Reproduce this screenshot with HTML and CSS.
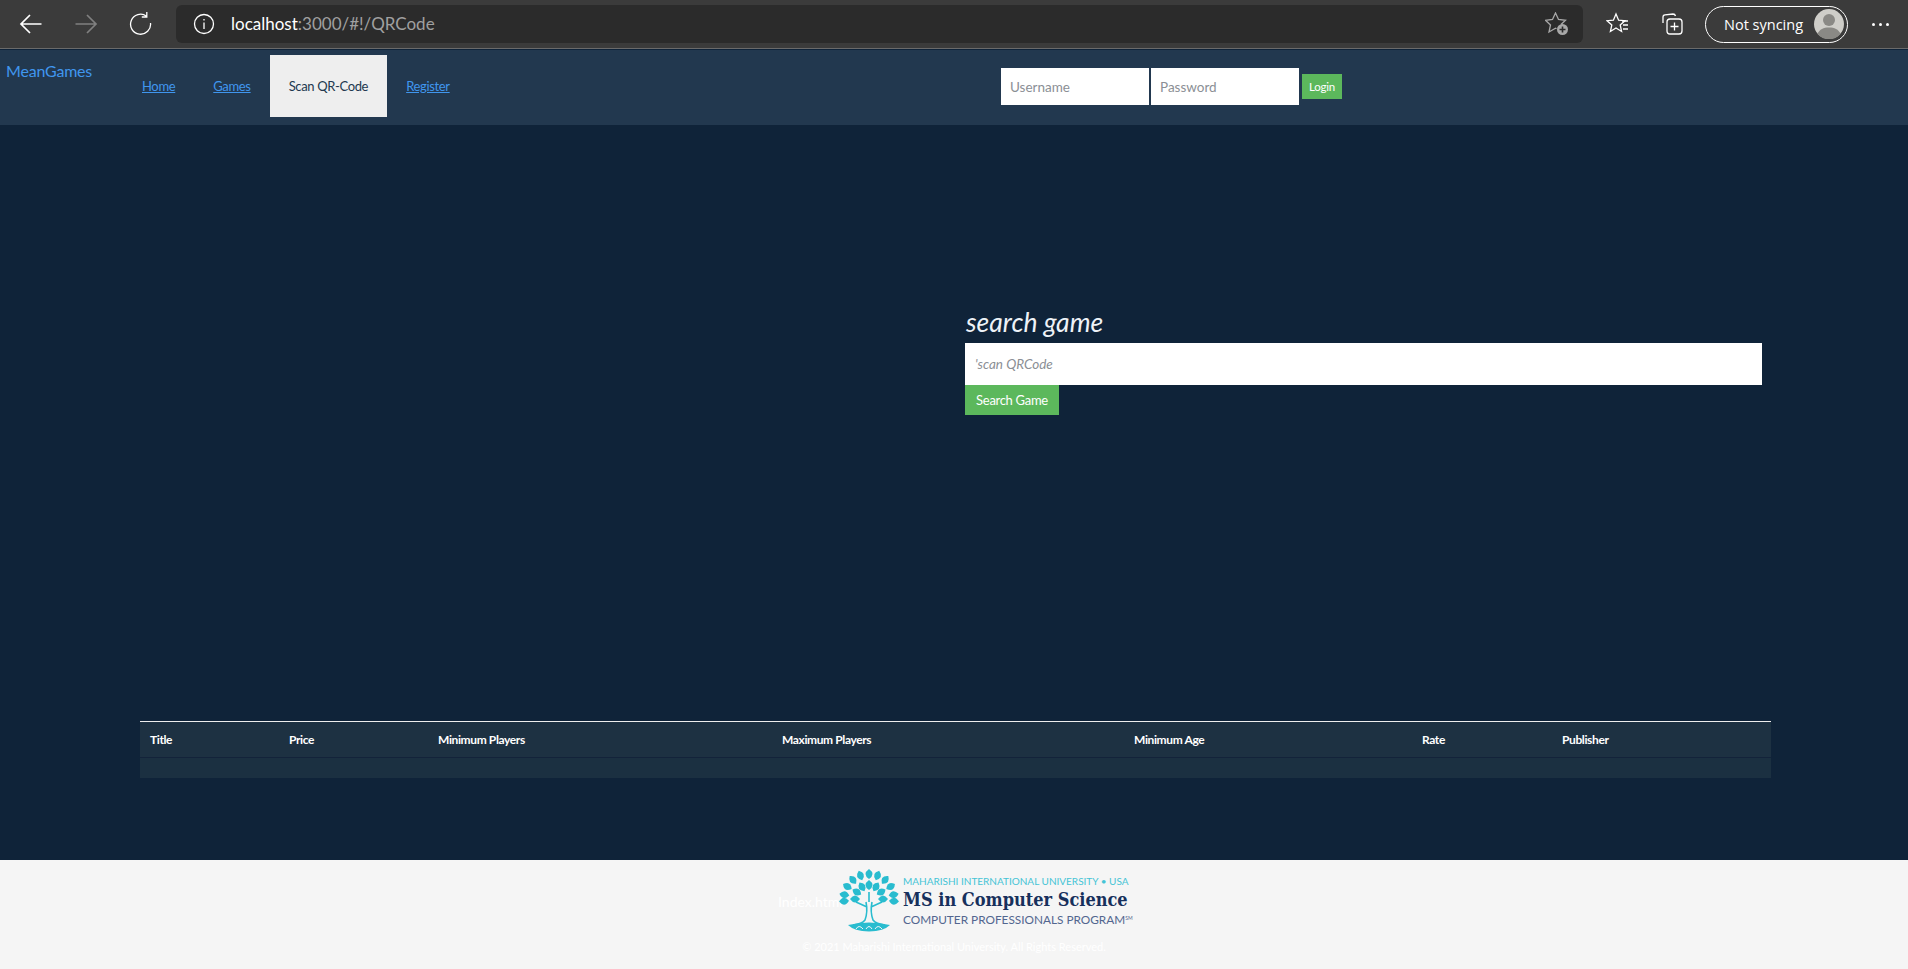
FILE: index.html
```html
<!DOCTYPE html>
<html lang="en">
<head>
  <meta charset="UTF-8" />
  <title>MeanGames</title>
  <link rel="stylesheet" href="styles.css">
</head>
<body>

  <!-- browser toolbar -->
  <div class="toolbar">
    <div class="tool-btn">
      <svg width="24" height="24" viewBox="0 0 24 24" class="ico"><path d="M22.5 12H2M11 3l-9 9 9 9"/></svg>
    </div>
    <div class="tool-btn dim">
      <svg width="24" height="24" viewBox="0 0 24 24" class="ico"><path d="M1.5 12H22M13 3l9 9-9 9"/></svg>
    </div>
    <div class="tool-btn">
      <svg width="24" height="24" viewBox="0 0 24 24" class="ico thin"><path d="M17.5 4.2A10 10 0 1 0 21.5 11M17.8 0v5h-5"/></svg>
    </div>
    <div class="address">
      <svg width="22" height="22" viewBox="0 0 22 22" class="ico thin"><circle cx="11" cy="11" r="9.5"/><path d="M11 9.5V16M11 6v1.6"/></svg>
      <span class="url"><span class="host">localhost</span>:3000/#!/QRCode</span>
      <svg class="ico thin star-add" width="24" height="24" viewBox="0 0 24 24"><path d="M11.5 16.8L10.5 16.2 4 20 5.5 13 .5 8.3 7.5 7.5 10.5 1 13.5 7.5 20.5 8.3 16 12.5"/><circle cx="17.5" cy="17.5" r="5.5" class="fill-grey"/><path d="M17.5 14.5v6M14.5 17.5h6" class="dark"/></svg>
    </div>
    <svg class="ico thin fav" width="24" height="24" viewBox="0 0 24 24"><path d="M10 2l2.6 6.2 6.4.5-4.800 4.300 1.400 6.500L10 16l-5.600 3.500L5.800 13 1 8.700l6.400-.5z"/><path d="M16 9h6M17 13h5M17 17h5"/></svg>
    <svg class="ico thin coll" width="24" height="24" viewBox="0 0 24 24"><path d="M3 11V5q0-2 2-2.200L13 2q2 0 2.500 2"/><rect x="7" y="7" width="15" height="15" rx="3"/><path d="M14.500 10.500v8M10.500 14.500h8"/></svg>
    <div class="sync">
      <span>Not syncing</span>
      <svg class="avatar" width="30" height="30" viewBox="0 0 30 30"><circle cx="15" cy="15" r="15" fill="#cfcec9"/><circle cx="15" cy="11" r="6" fill="#8a8985"/><path d="M3.500 25c2-5 6-6.500 11.500-6.500S24.500 20 26.500 25A15 15 0 0 1 3.500 25z" fill="#8a8985"/></svg>
    </div>
    <div class="more"><i></i><i></i><i></i></div>
  </div>

  <div class="page">
    <nav class="navbar">
      <a class="brand" href="#">MeanGames</a>
      <ul class="nav-links">
        <li><a href="#">Home</a></li>
        <li><a href="#">Games</a></li>
        <li class="active"><a href="#">Scan QR-Code</a></li>
        <li><a href="#">Register</a></li>
      </ul>
      <form class="login">
        <input type="text" placeholder="Username">
        <input type="password" placeholder="Password">
        <button type="button" class="btn-green btn-small">Login</button>
      </form>
    </nav>

    <main class="content">
      <div class="scan-row">
        <div class="scan-video"></div>
        <div class="scan-form">
          <h3>search game</h3>
          <input type="text" placeholder="'scan QRCode">
          <button type="button" class="btn-green">Search Game</button>
        </div>
      </div>

      <table class="games">
        <thead>
          <tr>
            <th class="c-title">Title</th>
            <th class="c-price">Price</th>
            <th class="c-min">Minimum Players</th>
            <th class="c-max">Maximum Players</th>
            <th class="c-age">Minimum Age</th>
            <th class="c-rate">Rate</th>
            <th>Publisher</th>
          </tr>
        </thead>
        <tbody>
          <tr><td colspan="7"></td></tr>
        </tbody>
      </table>
    </main>

    <footer>
      <div class="foot-row">
        <span class="foot-link">Index.html</span>
        <div class="logo">
          <svg class="tree" width="62" height="63" viewBox="0 0 62 63">
            <defs><path id="leaf" d="M0 0Q7-5 0-10Q-7-5 0 0z"/></defs>
            <g class="leaves">
              <use href="#leaf" transform="translate(31 10)"/>
              <use href="#leaf" transform="translate(37.8 11.2) rotate(20)"/>
              <use href="#leaf" transform="translate(43.9 14.7) rotate(40)"/>
              <use href="#leaf" transform="translate(48.3 20) rotate(60)"/>
              <use href="#leaf" transform="translate(50.7 26.5) rotate(80)"/>
              <use href="#leaf" transform="translate(51 31.7) rotate(95)"/>
              <use href="#leaf" transform="translate(24.2 11.2) rotate(-20)"/>
              <use href="#leaf" transform="translate(18.1 14.7) rotate(-40)"/>
              <use href="#leaf" transform="translate(13.7 20) rotate(-60)"/>
              <use href="#leaf" transform="translate(11.3 26.5) rotate(-80)"/>
              <use href="#leaf" transform="translate(11 31.7) rotate(-95)"/>
              <use href="#leaf" transform="translate(31 21)"/>
              <use href="#leaf" transform="translate(35.5 22.2) rotate(30)"/>
              <use href="#leaf" transform="translate(38.8 25.5) rotate(60)"/>
              <use href="#leaf" transform="translate(40 30) rotate(90)"/>
              <use href="#leaf" transform="translate(26.5 22.2) rotate(-30)"/>
              <use href="#leaf" transform="translate(23.2 25.5) rotate(-60)"/>
              <use href="#leaf" transform="translate(22 30) rotate(-90)"/>
            </g>
            <path class="trunk" d="M28 33q2 10-1 18-3 4-12 5M34 33q-2 10 1 18 3 4 12 5M29 38L18 33M33 38l11-5M31 33v-10"/>
            <path class="roots" d="M10 56q21-5 42 0-6 6-21 6.500-15-.5-21-6.500z"/>
            <path class="root-lines" d="M18 60q3-5 7 0M28 60q3-5 6 0M37 60q3-5 7 0"/>
          </svg>
          <div class="logo-text">
            <span class="logo-top">MAHARISHI INTERNATIONAL UNIVERSITY • USA</span>
            <span class="logo-main">MS in Computer Science</span>
            <span class="logo-sub">COMPUTER PROFESSIONALS PROGRAM<sup>SM</sup></span>
          </div>
        </div>
      </div>
      <p class="copy">© 2021 Maharishi International University. All Rights Reserved.</p>
    </footer>
  </div>

</body>
</html>
```

FILE: styles.css
```css
html, body {
  margin: 0;
  height: 969px;
  overflow: hidden;
}

body {
  font-family: Lato, "Open Sans", sans-serif;
  background: #0f2339;
  color: #fff;
  display: flex;
  flex-direction: column;
}

/* Browser toolbar */
.toolbar {
  height: 48px;
  border-bottom: 1px solid #6a6a6a;
  background: #3b3b3b;
  display: flex;
  align-items: center;
  padding-left: 19px;
  flex: none;
}

.ico {
  fill: none;
  stroke: #fff;
  stroke-width: 1.7;
  display: block;
}

.ico.thin {
  stroke-width: 1.3;
}

.tool-btn {
  width: 24px;
  margin-right: 31px;
}

.tool-btn.dim .ico {
  stroke: #808080;
}

.address {
  width: 1407px;
  height: 38px;
  margin-left: -8px;
  background: #2b2b2b;
  border-radius: 6px;
  display: flex;
  align-items: center;
  padding-left: 17px;
  box-sizing: border-box;
  margin-right: 23px;
}

.url {
  font-size: 17px;
  color: #a0a0a0;
  margin-left: 16px;
  margin-top: -2px;
  flex: 1;
}

.url .host {
  color: #fff;
}

.ico.star-add {
  stroke: #a8a8a8;
  margin-right: 14px;
}

.ico .fill-grey {
  fill: #a8a8a8;
  stroke: none;
}

.ico .dark {
  stroke: #2b2b2b;
  stroke-width: 1.6;
}

.fav {
  margin-right: 30px;
}

.coll {
  margin-right: 21px;
}

.sync {
  width: 143px;
  height: 37px;
  border: 1.5px solid #fff;
  border-radius: 19px;
  box-sizing: border-box;
  display: flex;
  align-items: center;
  justify-content: space-between;
  padding: 0 3px 0 18px;
  font-family: "Open Sans", sans-serif;
  font-size: 14.5px;
  color: #fff;
  margin-right: 24px;
}

.more {
  display: flex;
  gap: 4px;
}

.more i {
  width: 3px;
  height: 3px;
  background: #fff;
  border-radius: 50%;
}

/* Page */
.page {
  flex: 1;
  display: flex;
  flex-direction: column;
  min-height: 0;
}

.navbar {
  height: 75px;
  margin-top: 1px;
  background: #22384f;
  display: flex;
  align-items: flex-start;
  flex: none;
}

.brand {
  font-size: 16px;
  letter-spacing: -0.2px;
  color: #4096ee;
  text-decoration: none;
  width: 123px;
  padding: 11px 0 0 6px;
  box-sizing: border-box;
}

.nav-links {
  list-style: none;
  margin: 5px 0 0;
  padding: 0;
  display: flex;
  width: 878px;
}

.nav-links li {
  height: 62px;
  display: flex;
  align-items: center;
  padding: 0 19px;
  font-size: 13px;
  letter-spacing: -0.35px;
}

.nav-links a {
  color: #4096ee;
}

.nav-links .active {
  background: #eee;
}

.nav-links .active a {
  color: #22384f;
  text-decoration: none;
}

.login {
  margin-top: 18px;
  display: flex;
  align-items: center;
  gap: 2px;
}

.login input {
  width: 148px;
  height: 37px;
  border: 0;
  padding: 0 9px;
  box-sizing: border-box;
  font: 13.5px Lato, sans-serif;
}

input::placeholder {
  color: #8b8f95;
  opacity: 1;
}

.btn-green {
  background: #5cb85c;
  color: #fff;
  border: 0;
  padding: 0;
  font-family: Lato, sans-serif;
  font-size: 13px;
  letter-spacing: -0.3px;
  height: 30px;
  width: 94px;
}

.btn-small {
  width: 40px;
  height: 25px;
  font-size: 11.5px;
  letter-spacing: -0.2px;
  margin-left: 1px;
}

.content {
  flex: 1;
}

.scan-row {
  display: grid;
  grid-template-columns: 965px 797px;
  height: 596px;
}

.scan-form {
  padding-top: 182px;
}

.scan-form h3 {
  margin: 0;
  font-size: 26.5px;
  font-weight: 400;
  font-style: italic;
  line-height: 30px;
  height: 36px;
  padding-left: 1px;
  color: #eef2f7;
}

.scan-form input {
  display: block;
  width: 100%;
  height: 42px;
  border: 0;
  padding: 0 10px;
  box-sizing: border-box;
  font: italic 13.5px Lato, sans-serif;
}

.games {
  width: 1631px;
  margin-left: 140px;
  border-collapse: separate;
  border-spacing: 0;
  table-layout: fixed;
  border-top: 1px solid #eee;
  font-size: 12px;
  letter-spacing: -0.38px;
}

.games th {
  box-sizing: border-box;
  background: #1d3142;
  text-align: left;
  padding: 0 10px;
  height: 36px;
  border-bottom: 1px solid #13233a;
  font-weight: 700;
}

.games td {
  background: #1b3041;
  height: 20px;
  padding: 0;
}

.c-title { width: 139px; }
.c-price { width: 149px; }
.c-min { width: 344px; }
.c-max { width: 352px; }
.c-age { width: 288px; }
.c-rate { width: 140px; }

footer {
  height: 109px;
  background: #f5f5f5;
  flex: none;
}

.foot-row {
  display: flex;
  align-items: center;
  padding: 9px 0 0 778px;
}

.foot-link {
  font-size: 14px;
  color: #fff;
  width: 60px;
  margin-top: 2px;
}

.logo {
  display: flex;
  align-items: center;
}

.tree {
  flex: none;
  display: block;
}

.leaves {
  fill: #29bccf;
}

.trunk {
  fill: none;
  stroke: #29bccf;
  stroke-width: 1.6;
}

.roots {
  fill: #29bccf;
}

.root-lines {
  fill: none;
  stroke: #f5f5f5;
}

.logo-text {
  display: flex;
  flex-direction: column;
  margin-left: 3px;
  white-space: nowrap;
}

.logo-top {
  font-size: 10px;
  color: #45c4d6;
  line-height: 13px;
}

.logo-main {
  font-family: "DejaVu Serif Condensed", "DejaVu Serif", serif;
  font-weight: 700;
  font-size: 18px;
  color: #17305c;
  line-height: 24px;
}

.logo-sub {
  font-size: 11.8px;
  color: #52668f;
  line-height: 15px;
}

.logo-sub sup {
  font-size: 5px;
  vertical-align: 4px;
  line-height: 0;
}

.copy {
  margin: 8px 0 0;
  text-align: center;
  font-size: 11px;
  color: #fff;
}
```
